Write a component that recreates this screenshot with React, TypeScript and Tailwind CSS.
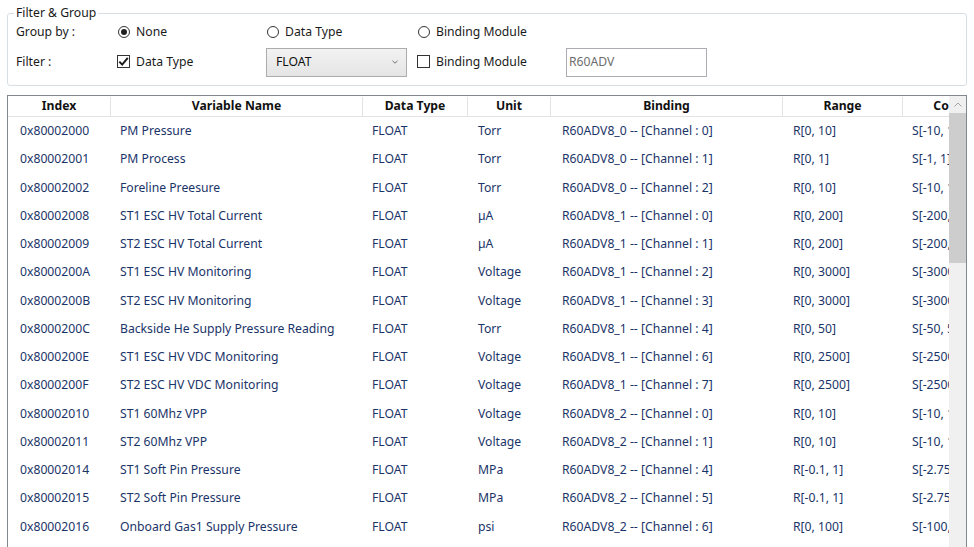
import React from "react";

type Row = [string, string, string, string, string, string, string];

const rows: Row[] = [
  ["0x80002000", "PM Pressure", "FLOAT", "Torr", "R60ADV8_0 -- [Channel : 0]", "R[0, 10]", "S[-10, 10]"],
  ["0x80002001", "PM Process", "FLOAT", "Torr", "R60ADV8_0 -- [Channel : 1]", "R[0, 1]", "S[-1, 1]"],
  ["0x80002002", "Foreline Preesure", "FLOAT", "Torr", "R60ADV8_0 -- [Channel : 2]", "R[0, 10]", "S[-10, 10]"],
  ["0x80002008", "ST1 ESC HV Total Current", "FLOAT", "µA", "R60ADV8_1 -- [Channel : 0]", "R[0, 200]", "S[-200, 200]"],
  ["0x80002009", "ST2 ESC HV Total Current", "FLOAT", "µA", "R60ADV8_1 -- [Channel : 1]", "R[0, 200]", "S[-200, 200]"],
  ["0x8000200A", "ST1 ESC HV Monitoring", "FLOAT", "Voltage", "R60ADV8_1 -- [Channel : 2]", "R[0, 3000]", "S[-3000, 3000]"],
  ["0x8000200B", "ST2 ESC HV Monitoring", "FLOAT", "Voltage", "R60ADV8_1 -- [Channel : 3]", "R[0, 3000]", "S[-3000, 3000]"],
  ["0x8000200C", "Backside He Supply Pressure Reading", "FLOAT", "Torr", "R60ADV8_1 -- [Channel : 4]", "R[0, 50]", "S[-50, 50]"],
  ["0x8000200E", "ST1 ESC HV VDC Monitoring", "FLOAT", "Voltage", "R60ADV8_1 -- [Channel : 6]", "R[0, 2500]", "S[-2500, 2500]"],
  ["0x8000200F", "ST2 ESC HV VDC Monitoring", "FLOAT", "Voltage", "R60ADV8_1 -- [Channel : 7]", "R[0, 2500]", "S[-2500, 2500]"],
  ["0x80002010", "ST1 60Mhz VPP", "FLOAT", "Voltage", "R60ADV8_2 -- [Channel : 0]", "R[0, 10]", "S[-10, 10]"],
  ["0x80002011", "ST2 60Mhz VPP", "FLOAT", "Voltage", "R60ADV8_2 -- [Channel : 1]", "R[0, 10]", "S[-10, 10]"],
  ["0x80002014", "ST1 Soft Pin Pressure", "FLOAT", "MPa", "R60ADV8_2 -- [Channel : 4]", "R[-0.1, 1]", "S[-2.75, 27.5]"],
  ["0x80002015", "ST2 Soft Pin Pressure", "FLOAT", "MPa", "R60ADV8_2 -- [Channel : 5]", "R[-0.1, 1]", "S[-2.75, 27.5]"],
  ["0x80002016", "Onboard Gas1 Supply Pressure", "FLOAT", "psi", "R60ADV8_2 -- [Channel : 6]", "R[0, 100]", "S[-100, 100]"],
  ["0x80002017", "Onboard Gas2 Supply Pressure", "FLOAT", "psi", "R60ADV8_2 -- [Channel : 7]", "R[0, 100]", "S[-100, 100]"],
];

const headers = ["Index", "Variable Name", "Data Type", "Unit", "Binding", "Range", "Conversion"];
const widths = ["w-[102px]", "w-[252px]", "w-[105px]", "w-[83px]", "w-[232px]", "w-[120px]", "w-[130px]"];
const pads = ["pl-[12px]", "pl-[10px]", "pl-[10px]", "pl-[11px]", "pl-[12px]", "pl-[11px]", "pl-[10px]"];

function Radio({ checked }: { checked?: boolean }) {
  return (
    <span className="w-[12px] h-[12px] rounded-full border border-[#333333] bg-white flex items-center justify-center shrink-0">
      {checked && <span className="w-[6px] h-[6px] rounded-full bg-[#212121]" />}
    </span>
  );
}

function Check({ checked }: { checked?: boolean }) {
  return (
    <span className="w-[13px] h-[13px] border border-[#333333] bg-white flex items-center justify-center shrink-0">
      {checked && (
        <svg width="11" height="11" viewBox="0 0 11 11">
          <path d="M1.3 5.6 L4.2 8.6 L9.8 1.8" fill="none" stroke="#1a1a1a" strokeWidth="2" />
        </svg>
      )}
    </span>
  );
}

export default function App() {
  return (
    <div
      className="w-[974px] h-[547px] overflow-hidden bg-white text-[12.2px] text-[#1a1a1a] pt-[5px]"
      style={{ fontFamily: '"Noto Sans", "Open Sans", sans-serif' }}
    >
      <fieldset className="ml-[7px] w-[960px] h-[81px] border border-[#d5dfe5] rounded-[3px] pl-[8px]">
        <legend className="ml-[-2px] px-[2px] leading-[16px]">Filter &amp; Group</legend>
        <div className="flex items-center h-[22px]">
          <span className="w-[101px]">Group by :</span>
          <span className="w-[149px] flex items-center gap-[6px] pl-[1px]">
            <Radio checked />
            <span>None</span>
          </span>
          <span className="w-[151px] flex items-center gap-[6px] pl-[1px]">
            <Radio />
            <span>Data Type</span>
          </span>
          <span className="flex items-center gap-[6px] pl-[1px]">
            <Radio />
            <span>Binding Module</span>
          </span>
        </div>
        <div className="flex items-center h-[38px]">
          <span className="w-[101px]">Filter :</span>
          <span className="w-[149px] flex items-center gap-[6px]">
            <Check checked />
            <span>Data Type</span>
          </span>
          <span className="w-[151px]">
            <span className="w-[141px] h-[29px] border border-[#acacac] bg-gradient-to-b from-[#f2f2f2] to-[#e5e5e5] flex items-center justify-between pl-[9px] pr-[8px] text-[#111111]">
              <span>FLOAT</span>
              <svg width="6" height="4" viewBox="0 0 6 4">
                <path d="M0.5 0.8 L3 3.2 L5.5 0.8" fill="none" stroke="#707070" strokeWidth="1" />
              </svg>
            </span>
          </span>
          <span className="w-[149px] flex items-center gap-[6px]">
            <Check />
            <span>Binding Module</span>
          </span>
          <span className="w-[141px] h-[29px] border border-[#abadb3] bg-white flex items-center pl-[2px] text-[#6d6d6d]">
            R60ADV
          </span>
        </div>
      </fieldset>

      <div className="ml-[7px] mt-[9px] w-[960px] h-[600px] border border-[#828790] flex">
        <div className="w-[941px] overflow-hidden">
          <div className="flex h-[21px] border-b border-[#e3e3e3] font-bold text-[#111111] pt-[1px]">
            {headers.map((h, i) => (
              <div
                key={h}
                className={`${widths[i]} shrink-0 flex items-center justify-center overflow-hidden whitespace-nowrap ${i > 0 ? "border-l border-[#e3e3e3]" : ""}`}
              >
                {h}
              </div>
            ))}
          </div>
          {rows.map((r) => (
            <div key={r[0]} className="flex h-[28.28px] items-center text-[#1a3468]">
              {r.map((c, i) => (
                <div key={i} className={`${widths[i]} ${pads[i]} shrink-0 whitespace-nowrap overflow-hidden`}>
                  {c}
                </div>
              ))}
            </div>
          ))}
        </div>
        <div className="w-[17px] bg-[#f0f0f0] flex flex-col">
          <div className="h-[17px] flex items-center justify-center">
            <svg width="8" height="5" viewBox="0 0 8 5">
              <path d="M0.5 4.5 L4 1 L7.5 4.5" fill="none" stroke="#a3a3a3" strokeWidth="1" />
            </svg>
          </div>
          <div className="h-[150px] bg-[#cdcdcd]" />
        </div>
      </div>
    </div>
  );
}
